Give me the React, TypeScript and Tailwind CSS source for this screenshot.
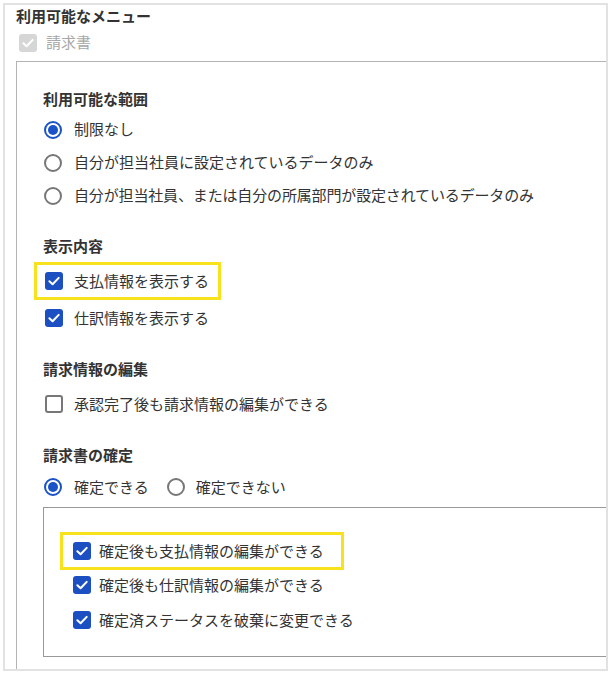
import React from 'react';

const CheckIcon = () => (
    <svg viewBox="0 0 18 18" className="w-[16px] h-[16px]" fill="none">
        <path d="M3.8 9.3 L7.4 12.7 L14.3 5.5" stroke="white" strokeWidth="2.3" strokeLinecap="round" strokeLinejoin="round" />
    </svg>
);

const Checkbox = ({ checked, disabled }: { checked: boolean; disabled?: boolean }) => {
    if (disabled) {
        return (
            <div className="w-[18px] h-[18px] rounded-[3px] bg-[#d6d6d6] flex items-center justify-center shrink-0">
                <CheckIcon />
            </div>
        );
    }
    if (checked) {
        return (
            <div className="w-[18px] h-[18px] rounded-[3px] bg-[#1b4fc2] flex items-center justify-center shrink-0">
                <CheckIcon />
            </div>
        );
    }
    return <div className="w-[18px] h-[18px] rounded-[3px] border-2 border-[#777] bg-white shrink-0" />;
};

const Radio = ({ checked }: { checked: boolean }) => (
    <div
        className={
            checked
                ? 'w-[18px] h-[18px] rounded-full border-2 border-[#1b52c8] flex items-center justify-center shrink-0'
                : 'w-[18px] h-[18px] rounded-full border-2 border-[#777] shrink-0'
        }
    >
        {checked && <div className="w-[10px] h-[10px] rounded-full bg-[#1b52c8]" />}
    </div>
);

const Heading = ({ children, className = '' }: { children: React.ReactNode; className?: string }) => (
    <div className={'h-[20px] leading-[20px] font-bold text-[15px] text-[#333] ' + className}>{children}</div>
);

const App = () => {
    return (
        <div
            className="w-[609px] h-[673px] bg-white pt-[3px] pl-[3px] text-[#333]"
            style={{ fontFamily: '"Noto Sans CJK JP", "Noto Sans", sans-serif' }}
        >
            <div className="w-[605px] h-[668px] border-2 border-[#e2e2e2] overflow-hidden">
                {/* menu title */}
                <div className="pl-[11px] h-[22px] leading-[22px] font-bold text-[15px]">利用可能なメニュー</div>
                <div className="h-[31px] flex items-center pl-[14px] gap-[9px]">
                    <Checkbox checked disabled />
                    <span className="text-[15px] text-[#a8a8a8]">請求書</span>
                </div>

                {/* settings box */}
                <div className="mt-[3px] ml-[11px] w-[700px] border border-[#b4b4b4] pt-[27px] pl-[26px] pb-[30px]">
                    <Heading>利用可能な範囲</Heading>
                    <div className="mt-[4px]">
                        <div className="h-[33px] flex items-center gap-[12px] pl-[1px] text-[15px]">
                            <Radio checked />
                            <span>制限なし</span>
                        </div>
                        <div className="h-[33px] flex items-center gap-[12px] pl-[1px] text-[15px]">
                            <Radio checked={false} />
                            <span>自分が担当社員に設定されているデータのみ</span>
                        </div>
                        <div className="h-[33px] flex items-center gap-[12px] pl-[1px] text-[15px]">
                            <Radio checked={false} />
                            <span className="tracking-[-0.15px]">自分が担当社員、または自分の所属部門が設定されているデータのみ</span>
                        </div>
                    </div>

                    <Heading className="mt-[24px]">表示内容</Heading>
                    <div className="mt-[6px] -ml-[9px] w-[187px] h-[38px] border-[3px] border-[#f8e21c] flex items-center pl-[8px] gap-[11px] text-[15px]">
                        <Checkbox checked />
                        <span>支払情報を表示する</span>
                    </div>
                    <div className="h-[36px] flex items-center pl-[2px] gap-[11px] text-[15px]">
                        <Checkbox checked />
                        <span>仕訳情報を表示する</span>
                    </div>

                    <Heading className="mt-[23px]">請求情報の編集</Heading>
                    <div className="mt-[8px] h-[34px] flex items-center pl-[2px] gap-[11px] text-[15px]">
                        <Checkbox checked={false} />
                        <span>承認完了後も請求情報の編集ができる</span>
                    </div>

                    <Heading className="mt-[24px]">請求書の確定</Heading>
                    <div className="mt-[5px] h-[34px] flex items-center pl-[1px] text-[15px]">
                        <Radio checked />
                        <span className="ml-[12px]">確定できる</span>
                        <div className="ml-[18px]">
                            <Radio checked={false} />
                        </div>
                        <span className="ml-[11px]">確定できない</span>
                    </div>

                    {/* nested options */}
                    <div className="mt-[3px] w-[700px] border border-[#999] pt-[24px] pl-[16px] pb-[21px] text-[15px]">
                        <div className="w-[284px] h-[38px] border-[3px] border-[#f8e21c] flex items-center pl-[10px] gap-[8px]">
                            <Checkbox checked />
                            <span>確定後も支払情報の編集ができる</span>
                        </div>
                        <div className="h-[30px] flex items-center pl-[13px] gap-[8px]">
                            <Checkbox checked />
                            <span>確定後も仕訳情報の編集ができる</span>
                        </div>
                        <div className="mt-[5px] h-[30px] flex items-center pl-[13px] gap-[8px]">
                            <Checkbox checked />
                            <span>確定済ステータスを破棄に変更できる</span>
                        </div>
                    </div>
                </div>
            </div>
        </div>
    );
};

export default App;
